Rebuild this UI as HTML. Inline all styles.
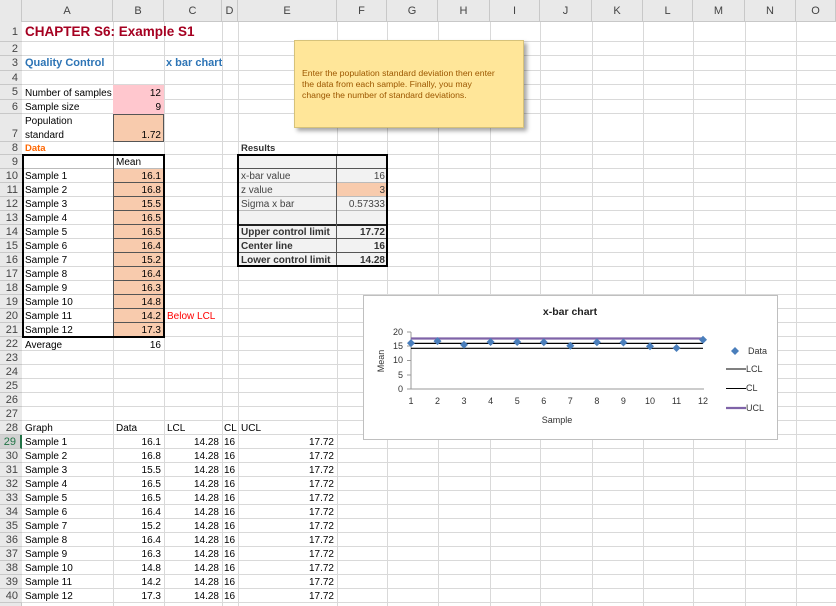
<!DOCTYPE html>
<html><head><meta charset="utf-8"><style>
body{margin:0;width:836px;height:606px;overflow:hidden;background:#fff;font-family:"Liberation Sans",sans-serif;position:relative}
div,span{position:absolute;box-sizing:border-box}
.vl{top:22px;height:584px;width:1px;background:#d9d9d9}
.hl{left:22px;width:814px;height:1px;background:#d9d9d9}
.ch{top:0;height:22px;font-size:11px;color:#444;text-align:center;line-height:22px;border-right:1px solid #c8c8c8}
.rh{left:0;width:22px;font-size:11px;color:#444;text-align:right;padding-right:4px;background:#e9e9e9;border-bottom:1px solid #c8c8c8}
.t{font-size:10px;line-height:13px;white-space:nowrap;color:#000}
.r{text-align:right}
</style></head><body>
<div style="left:0;top:0;width:836px;height:22px;background:#e9e9e9;border-bottom:1px solid #c8c8c8"></div>
<div style="left:0;top:0;width:22px;height:606px;background:#e9e9e9;border-right:1px solid #c8c8c8"></div>
<div class="ch" style="left:0;width:22px"></div>
<div class="ch" style="left:22px;width:91px">A</div>
<div class="ch" style="left:113px;width:51px">B</div>
<div class="ch" style="left:164px;width:58px">C</div>
<div class="ch" style="left:222px;width:16px">D</div>
<div class="ch" style="left:238px;width:99px">E</div>
<div class="ch" style="left:337px;width:50px">F</div>
<div class="ch" style="left:387px;width:51px">G</div>
<div class="ch" style="left:438px;width:52px">H</div>
<div class="ch" style="left:490px;width:50px">I</div>
<div class="ch" style="left:540px;width:52px">J</div>
<div class="ch" style="left:592px;width:51px">K</div>
<div class="ch" style="left:643px;width:50px">L</div>
<div class="ch" style="left:693px;width:52px">M</div>
<div class="ch" style="left:745px;width:51px">N</div>
<div class="ch" style="left:796px;width:40px">O</div>

<div class="vl" style="left:113px"></div><div class="vl" style="left:164px"></div><div class="vl" style="left:222px"></div><div class="vl" style="left:238px"></div><div class="vl" style="left:337px"></div><div class="vl" style="left:387px"></div><div class="vl" style="left:438px"></div><div class="vl" style="left:490px"></div><div class="vl" style="left:540px"></div><div class="vl" style="left:592px"></div><div class="vl" style="left:643px"></div><div class="vl" style="left:693px"></div><div class="vl" style="left:745px"></div><div class="vl" style="left:796px"></div>
<div class="hl" style="top:41px"></div><div class="hl" style="top:55px"></div><div class="hl" style="top:70px"></div><div class="hl" style="top:84px"></div><div class="hl" style="top:99px"></div><div class="hl" style="top:113px"></div><div class="hl" style="top:141px"></div><div class="hl" style="top:154px"></div><div class="hl" style="top:168px"></div>
<div class="hl" style="top:182px"></div><div class="hl" style="top:196px"></div><div class="hl" style="top:210px"></div><div class="hl" style="top:224px"></div><div class="hl" style="top:238px"></div><div class="hl" style="top:252px"></div><div class="hl" style="top:266px"></div><div class="hl" style="top:280px"></div><div class="hl" style="top:294px"></div><div class="hl" style="top:308px"></div><div class="hl" style="top:322px"></div><div class="hl" style="top:336px"></div><div class="hl" style="top:350px"></div><div class="hl" style="top:364px"></div><div class="hl" style="top:378px"></div><div class="hl" style="top:392px"></div><div class="hl" style="top:406px"></div><div class="hl" style="top:420px"></div><div class="hl" style="top:434px"></div><div class="hl" style="top:448px"></div><div class="hl" style="top:462px"></div><div class="hl" style="top:476px"></div><div class="hl" style="top:490px"></div><div class="hl" style="top:504px"></div><div class="hl" style="top:518px"></div><div class="hl" style="top:532px"></div><div class="hl" style="top:546px"></div><div class="hl" style="top:560px"></div><div class="hl" style="top:574px"></div><div class="hl" style="top:588px"></div><div class="hl" style="top:602px"></div>

<div class="rh" style="top:22px;height:20px;line-height:20px">1</div>
<div class="rh" style="top:42px;height:14px;line-height:14px">2</div>
<div class="rh" style="top:56px;height:15px;line-height:15px">3</div>
<div class="rh" style="top:71px;height:14px;line-height:14px">4</div>
<div class="rh" style="top:85px;height:15px;line-height:15px">5</div>
<div class="rh" style="top:100px;height:14px;line-height:14px">6</div>
<div class="rh" style="top:114px;height:28px;line-height:40px">7</div>
<div class="rh" style="top:142px;height:13px;line-height:13px">8</div>
<div class="rh" style="top:155px;height:14px;line-height:14px">9</div>
<div class="rh" style="top:169px;height:14px;line-height:14px">10</div>
<div class="rh" style="top:183px;height:14px;line-height:14px">11</div>
<div class="rh" style="top:197px;height:14px;line-height:14px">12</div>
<div class="rh" style="top:211px;height:14px;line-height:14px">13</div>
<div class="rh" style="top:225px;height:14px;line-height:14px">14</div>
<div class="rh" style="top:239px;height:14px;line-height:14px">15</div>
<div class="rh" style="top:253px;height:14px;line-height:14px">16</div>
<div class="rh" style="top:267px;height:14px;line-height:14px">17</div>
<div class="rh" style="top:281px;height:14px;line-height:14px">18</div>
<div class="rh" style="top:295px;height:14px;line-height:14px">19</div>
<div class="rh" style="top:309px;height:14px;line-height:14px">20</div>
<div class="rh" style="top:323px;height:14px;line-height:14px">21</div>
<div class="rh" style="top:337px;height:14px;line-height:14px">22</div>
<div class="rh" style="top:351px;height:14px;line-height:14px">23</div>
<div class="rh" style="top:365px;height:14px;line-height:14px">24</div>
<div class="rh" style="top:379px;height:14px;line-height:14px">25</div>
<div class="rh" style="top:393px;height:14px;line-height:14px">26</div>
<div class="rh" style="top:407px;height:14px;line-height:14px">27</div>
<div class="rh" style="top:421px;height:14px;line-height:14px">28</div>
<div class="rh" style="top:435px;height:14px;line-height:14px;color:#217346;background:#d2d2d2;border-right:2px solid #217346">29</div>
<div class="rh" style="top:449px;height:14px;line-height:14px">30</div>
<div class="rh" style="top:463px;height:14px;line-height:14px">31</div>
<div class="rh" style="top:477px;height:14px;line-height:14px">32</div>
<div class="rh" style="top:491px;height:14px;line-height:14px">33</div>
<div class="rh" style="top:505px;height:14px;line-height:14px">34</div>
<div class="rh" style="top:519px;height:14px;line-height:14px">35</div>
<div class="rh" style="top:533px;height:14px;line-height:14px">36</div>
<div class="rh" style="top:547px;height:14px;line-height:14px">37</div>
<div class="rh" style="top:561px;height:14px;line-height:14px">38</div>
<div class="rh" style="top:575px;height:14px;line-height:14px">39</div>
<div class="rh" style="top:589px;height:14px;line-height:14px">40</div>

<div style="left:113px;top:85px;width:51px;height:29px;background:#ffc7ce"></div>
<div style="left:113px;top:114px;width:51px;height:28px;background:#f8cbad;border:1px solid #555"></div>
<div style="left:113px;top:169px;width:51px;height:168px;background:#f8cbad;border-left:1px solid #555"></div>
<div style="left:238px;top:155px;width:150px;height:112px;background:#f2f2f2"></div>
<div style="left:337px;top:183px;width:50px;height:14px;background:#f8cbad"></div>
<div style="left:238px;top:168px;width:150px;height:1px;background:#555"></div>
<div style="left:238px;top:182px;width:150px;height:1px;background:#bbb"></div>
<div style="left:238px;top:196px;width:150px;height:1px;background:#bbb"></div>
<div style="left:238px;top:210px;width:150px;height:1px;background:#bbb"></div>
<div style="left:238px;top:224px;width:150px;height:2px;background:#222"></div>
<div style="left:238px;top:238px;width:150px;height:1px;background:#555"></div>
<div style="left:238px;top:252px;width:150px;height:1px;background:#555"></div>
<div style="left:336px;top:155px;width:1px;height:112px;background:#555"></div>
<div style="left:22px;top:168px;width:142px;height:1px;background:#bbb"></div>
<div style="left:113px;top:182px;width:51px;height:1px;background:#555"></div>
<div style="left:113px;top:196px;width:51px;height:1px;background:#555"></div>
<div style="left:113px;top:210px;width:51px;height:1px;background:#555"></div>
<div style="left:113px;top:224px;width:51px;height:1px;background:#555"></div>
<div style="left:113px;top:238px;width:51px;height:1px;background:#555"></div>
<div style="left:113px;top:252px;width:51px;height:1px;background:#555"></div>
<div style="left:113px;top:266px;width:51px;height:1px;background:#555"></div>
<div style="left:113px;top:280px;width:51px;height:1px;background:#555"></div>
<div style="left:113px;top:294px;width:51px;height:1px;background:#555"></div>
<div style="left:113px;top:308px;width:51px;height:1px;background:#555"></div>
<div style="left:113px;top:322px;width:51px;height:1px;background:#555"></div>
<div style="left:113px;top:155px;width:51px;height:14px;border-left:1px solid #555"></div>
<div style="left:22px;top:154px;width:143px;height:184px;border:2px solid #000"></div>
<div style="left:237px;top:154px;width:151px;height:113px;border:2px solid #000"></div>

<span class="t" style="left:25px;top:24px;font-size:13.5px;line-height:16px;font-weight:bold;color:#a50021">CHAPTER S6: Example S1</span>
<span class="t" style="left:25px;top:57px;font-size:11px;font-weight:bold;color:#2e75b6">Quality Control</span>
<span class="t" style="left:166px;top:57px;font-size:11px;font-weight:bold;color:#2e75b6">x bar chart</span>
<span class="t" style="left:25px;top:87px;width:88px;overflow:hidden">Number of samples</span>
<span class="t r" style="left:113px;top:87px;width:48px">12</span>
<span class="t" style="left:25px;top:101px">Sample size</span>
<span class="t r" style="left:113px;top:101px;width:48px">9</span>
<span class="t" style="left:25px;top:115px">Population</span>
<span class="t" style="left:25px;top:129px">standard</span>
<span class="t r" style="left:113px;top:129px;width:48px">1.72</span>
<span class="t" style="left:25px;top:142px;font-weight:bold;color:#ff6600;font-size:9.5px">Data</span>
<span class="t" style="left:116px;top:156px">Mean</span>
<span class="t" style="left:241px;top:142px;font-weight:bold;font-size:9.5px;color:#333">Results</span>

<span class="t" style="left:25px;top:170px">Sample 1</span><span class="t r" style="left:113px;top:170px;width:48px">16.1</span>
<span class="t" style="left:25px;top:184px">Sample 2</span><span class="t r" style="left:113px;top:184px;width:48px">16.8</span>
<span class="t" style="left:25px;top:198px">Sample 3</span><span class="t r" style="left:113px;top:198px;width:48px">15.5</span>
<span class="t" style="left:25px;top:212px">Sample 4</span><span class="t r" style="left:113px;top:212px;width:48px">16.5</span>
<span class="t" style="left:25px;top:226px">Sample 5</span><span class="t r" style="left:113px;top:226px;width:48px">16.5</span>
<span class="t" style="left:25px;top:240px">Sample 6</span><span class="t r" style="left:113px;top:240px;width:48px">16.4</span>
<span class="t" style="left:25px;top:254px">Sample 7</span><span class="t r" style="left:113px;top:254px;width:48px">15.2</span>
<span class="t" style="left:25px;top:268px">Sample 8</span><span class="t r" style="left:113px;top:268px;width:48px">16.4</span>
<span class="t" style="left:25px;top:282px">Sample 9</span><span class="t r" style="left:113px;top:282px;width:48px">16.3</span>
<span class="t" style="left:25px;top:296px">Sample 10</span><span class="t r" style="left:113px;top:296px;width:48px">14.8</span>
<span class="t" style="left:25px;top:310px">Sample 11</span><span class="t r" style="left:113px;top:310px;width:48px">14.2</span>
<span class="t" style="left:167px;top:310px;color:#ff0000">Below LCL</span>
<span class="t" style="left:25px;top:324px">Sample 12</span><span class="t r" style="left:113px;top:324px;width:48px">17.3</span>
<span class="t" style="left:25px;top:339px">Average</span><span class="t r" style="left:113px;top:339px;width:48px">16</span>

<span class="t" style="left:241px;top:170px;color:#444">x-bar value</span><span class="t r" style="left:337px;top:170px;width:48px;color:#444">16</span>
<span class="t" style="left:241px;top:184px;color:#444">z value</span><span class="t r" style="left:337px;top:184px;width:48px;color:#444">3</span>
<span class="t" style="left:241px;top:198px;color:#444">Sigma x bar</span><span class="t r" style="left:337px;top:198px;width:48px;color:#444">0.57333</span>
<span class="t" style="left:241px;top:226px;font-weight:bold;color:#333">Upper control limit</span><span class="t r" style="left:337px;top:226px;width:48px;font-weight:bold;color:#333">17.72</span>
<span class="t" style="left:241px;top:240px;font-weight:bold;color:#333">Center line</span><span class="t r" style="left:337px;top:240px;width:48px;font-weight:bold;color:#333">16</span>
<span class="t" style="left:241px;top:254px;font-weight:bold;color:#333">Lower control limit</span><span class="t r" style="left:337px;top:254px;width:48px;font-weight:bold;color:#333">14.28</span>

<span class="t" style="left:25px;top:422px">Graph</span><span class="t" style="left:116px;top:422px">Data</span><span class="t" style="left:167px;top:422px">LCL</span><span class="t" style="left:224px;top:422px">CL</span><span class="t" style="left:241px;top:422px">UCL</span>

<span class="t" style="left:25px;top:436px">Sample 1</span><span class="t r" style="left:113px;top:436px;width:48px">16.1</span><span class="t r" style="left:164px;top:436px;width:55px">14.28</span><span class="t" style="left:224px;top:436px">16</span><span class="t r" style="left:238px;top:436px;width:96px">17.72</span>
<span class="t" style="left:25px;top:450px">Sample 2</span><span class="t r" style="left:113px;top:450px;width:48px">16.8</span><span class="t r" style="left:164px;top:450px;width:55px">14.28</span><span class="t" style="left:224px;top:450px">16</span><span class="t r" style="left:238px;top:450px;width:96px">17.72</span>
<span class="t" style="left:25px;top:464px">Sample 3</span><span class="t r" style="left:113px;top:464px;width:48px">15.5</span><span class="t r" style="left:164px;top:464px;width:55px">14.28</span><span class="t" style="left:224px;top:464px">16</span><span class="t r" style="left:238px;top:464px;width:96px">17.72</span>
<span class="t" style="left:25px;top:478px">Sample 4</span><span class="t r" style="left:113px;top:478px;width:48px">16.5</span><span class="t r" style="left:164px;top:478px;width:55px">14.28</span><span class="t" style="left:224px;top:478px">16</span><span class="t r" style="left:238px;top:478px;width:96px">17.72</span>
<span class="t" style="left:25px;top:492px">Sample 5</span><span class="t r" style="left:113px;top:492px;width:48px">16.5</span><span class="t r" style="left:164px;top:492px;width:55px">14.28</span><span class="t" style="left:224px;top:492px">16</span><span class="t r" style="left:238px;top:492px;width:96px">17.72</span>
<span class="t" style="left:25px;top:506px">Sample 6</span><span class="t r" style="left:113px;top:506px;width:48px">16.4</span><span class="t r" style="left:164px;top:506px;width:55px">14.28</span><span class="t" style="left:224px;top:506px">16</span><span class="t r" style="left:238px;top:506px;width:96px">17.72</span>
<span class="t" style="left:25px;top:520px">Sample 7</span><span class="t r" style="left:113px;top:520px;width:48px">15.2</span><span class="t r" style="left:164px;top:520px;width:55px">14.28</span><span class="t" style="left:224px;top:520px">16</span><span class="t r" style="left:238px;top:520px;width:96px">17.72</span>
<span class="t" style="left:25px;top:534px">Sample 8</span><span class="t r" style="left:113px;top:534px;width:48px">16.4</span><span class="t r" style="left:164px;top:534px;width:55px">14.28</span><span class="t" style="left:224px;top:534px">16</span><span class="t r" style="left:238px;top:534px;width:96px">17.72</span>
<span class="t" style="left:25px;top:548px">Sample 9</span><span class="t r" style="left:113px;top:548px;width:48px">16.3</span><span class="t r" style="left:164px;top:548px;width:55px">14.28</span><span class="t" style="left:224px;top:548px">16</span><span class="t r" style="left:238px;top:548px;width:96px">17.72</span>
<span class="t" style="left:25px;top:562px">Sample 10</span><span class="t r" style="left:113px;top:562px;width:48px">14.8</span><span class="t r" style="left:164px;top:562px;width:55px">14.28</span><span class="t" style="left:224px;top:562px">16</span><span class="t r" style="left:238px;top:562px;width:96px">17.72</span>
<span class="t" style="left:25px;top:576px">Sample 11</span><span class="t r" style="left:113px;top:576px;width:48px">14.2</span><span class="t r" style="left:164px;top:576px;width:55px">14.28</span><span class="t" style="left:224px;top:576px">16</span><span class="t r" style="left:238px;top:576px;width:96px">17.72</span>
<span class="t" style="left:25px;top:590px">Sample 12</span><span class="t r" style="left:113px;top:590px;width:48px">17.3</span><span class="t r" style="left:164px;top:590px;width:55px">14.28</span><span class="t" style="left:224px;top:590px">16</span><span class="t r" style="left:238px;top:590px;width:96px">17.72</span>

<div style="left:294px;top:40px;width:230px;height:88px;background:#ffe699;border:1px solid #d6c27a;box-shadow:3px 3px 4px rgba(0,0,0,0.35);padding:27px 8px 0 7px;font-size:8.7px;line-height:11px;color:#9c5700">Enter the population standard deviation then enter<br>the data from each sample. Finally, you may<br>change the number of standard deviations.</div>

<svg style="position:absolute;left:0;top:0" width="836" height="606" font-family="Liberation Sans, sans-serif">
<rect x="363.5" y="295.5" width="414" height="144" fill="#fff" stroke="#bfbfbf"/>
<text x="570" y="315" font-size="10.5" font-weight="bold" text-anchor="middle" fill="#222">x-bar chart</text>
<g font-size="9" fill="#333" text-anchor="end">
<text x="403" y="335">20</text><text x="403" y="349">15</text><text x="403" y="363">10</text><text x="403" y="378">5</text><text x="403" y="392">0</text>
</g>
<line x1="411" y1="332" x2="411" y2="389" stroke="#999"/>
<line x1="407" y1="389" x2="704" y2="389" stroke="#999"/>
<g stroke="#999"><line x1="407" y1="332" x2="411" y2="332"/><line x1="407" y1="346" x2="411" y2="346"/><line x1="407" y1="360.5" x2="411" y2="360.5"/><line x1="407" y1="375" x2="411" y2="375"/></g>
<g font-size="9" fill="#333" text-anchor="middle">
<text x="411" y="404">1</text><text x="437.5" y="404">2</text><text x="464" y="404">3</text><text x="490.6" y="404">4</text><text x="517.2" y="404">5</text><text x="543.8" y="404">6</text><text x="570.3" y="404">7</text><text x="596.9" y="404">8</text><text x="623.4" y="404">9</text><text x="650" y="404">10</text><text x="676.5" y="404">11</text><text x="703" y="404">12</text>
<text x="557" y="423">Sample</text>
<text transform="translate(384,361) rotate(-90)">Mean</text>
</g>
<line x1="411" y1="348.3" x2="703" y2="348.3" stroke="#000" stroke-width="1.2"/>
<line x1="411" y1="343.4" x2="703" y2="343.4" stroke="#000" stroke-width="1.2"/>
<line x1="411" y1="338.5" x2="703" y2="338.5" stroke="#7f63a8" stroke-width="2.2"/>
<g fill="#4a7ebb">
<path d="M411 339.1l4 4-4 4-4-4z"/>
<path d="M437.5 337.1l4 4-4 4-4-4z"/>
<path d="M464 340.8l4 4-4 4-4-4z"/>
<path d="M490.6 338l4 4-4 4-4-4z"/>
<path d="M517.2 338l4 4-4 4-4-4z"/>
<path d="M543.8 338.3l4 4-4 4-4-4z"/>
<path d="M570.3 341.7l4 4-4 4-4-4z"/>
<path d="M596.9 338.3l4 4-4 4-4-4z"/>
<path d="M623.4 338.5l4 4-4 4-4-4z"/>
<path d="M650 342.3l4 4-4 4-4-4z"/>
<path d="M676.5 344l4 4-4 4-4-4z"/>
<path d="M703 335.7l4 4-4 4-4-4z"/>
<path d="M735 347l4 4-4 4-4-4z"/>
</g>
<g font-size="9" fill="#333">
<text x="748" y="354">Data</text>
<text x="746" y="372">LCL</text>
<text x="746" y="391">CL</text>
<text x="746" y="411">UCL</text>
</g>
<line x1="726" y1="369" x2="746" y2="369" stroke="#000"/>
<line x1="726" y1="388.5" x2="746" y2="388.5" stroke="#000"/>
<line x1="726" y1="408" x2="746" y2="408" stroke="#7f63a8" stroke-width="2.2"/>
</svg>
</body></html>
